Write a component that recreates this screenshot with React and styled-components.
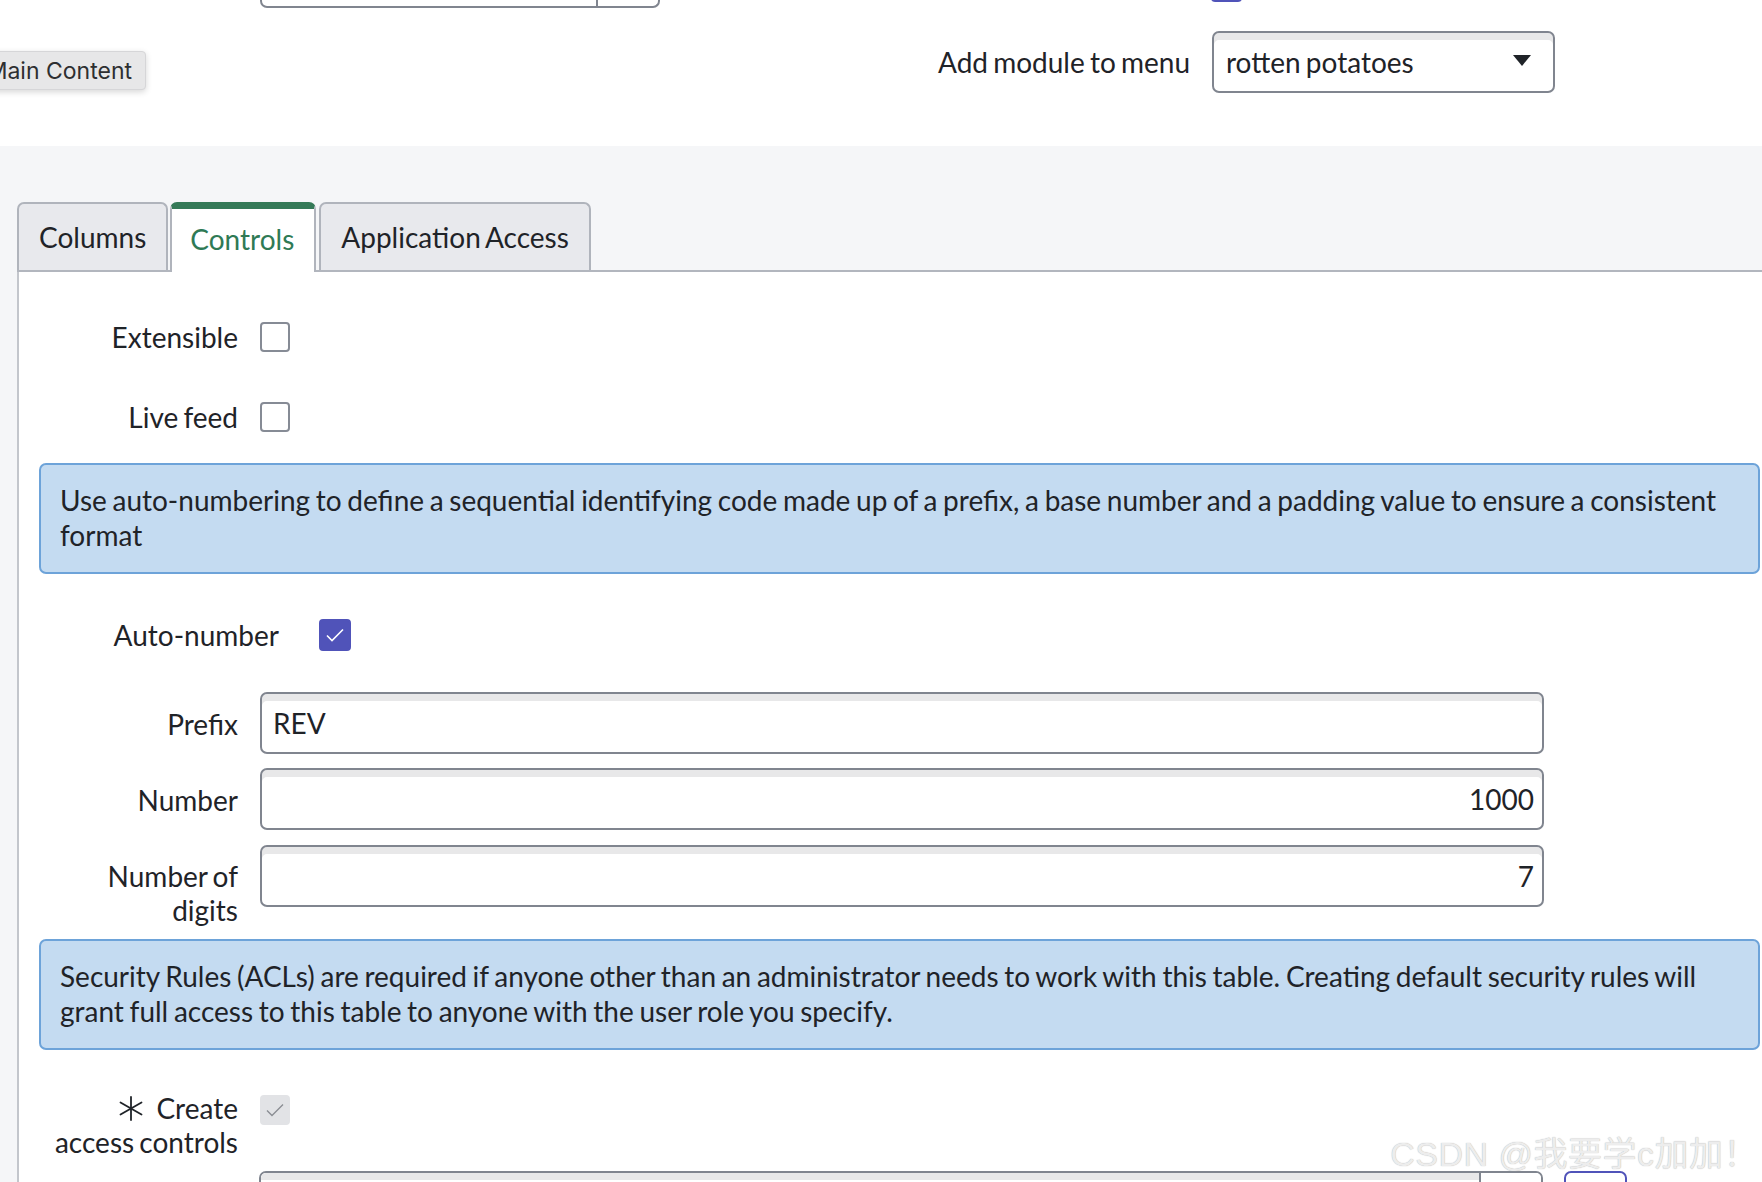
import styled, { createGlobalStyle } from 'styled-components'

const GlobalStyle = createGlobalStyle`
  html, body {
    margin: 0;
    padding: 0;
    background: #fff;
  }
  body {
    font-family: Lato, "Noto Sans", sans-serif;
    color: #1f2328;
    word-spacing: -2px;
    overflow: hidden;
  }
`

const Page = styled.div`
  position: relative;
  width: 1762px;
  height: 1182px;
  overflow: hidden;
  background: #f5f6f8;
`

const Header = styled.div`
  position: relative;
  height: 146px;
  background: #fff;
`

const CutRow = styled.div`
  display: flex;
  align-items: flex-end;
  height: 8px;
  overflow: hidden;
`

const CutField = styled.div`
  display: flex;
  margin-left: 260px;
  width: 400px;
  height: 40px;
  box-sizing: border-box;
  border: 2px solid #80858f;
  border-top: none;
  border-radius: 0 0 7px 7px;

  > span {
    flex: 1;
  }
  > span + span {
    flex: 0 0 60px;
    border-left: 2px solid #80858f;
  }
`

const CutCheck = styled.div`
  margin-left: 551px;
  margin-bottom: 6px;
  width: 31px;
  height: 30px;
  border-radius: 4px;
  background: #5053b9;
`

const SkipLink = styled.div`
  position: absolute;
  left: -36px;
  top: 51px;
  width: 182px;
  height: 39px;
  box-sizing: border-box;
  padding: 0 13px 0 0;
  display: flex;
  align-items: center;
  justify-content: flex-end;
  background: #e7e7e8;
  border: 1px solid #d6d6d8;
  border-radius: 4px;
  box-shadow: 0 2px 6px rgba(0, 0, 0, 0.16);
  font-family: Inter, "Liberation Sans", sans-serif;
  font-size: 23px;
  word-spacing: 0;
  color: #2e2f31;
  white-space: nowrap;
`

const ModuleRow = styled.div`
  display: flex;
  align-items: center;
  gap: 22px;
  margin-top: 23px;
  padding-left: 938px;
  font-size: 28px;
`

const Select = styled.div`
  width: 343px;
  height: 62px;
  box-sizing: border-box;
  padding: 0 22px 0 12px;
  display: flex;
  align-items: center;
  justify-content: space-between;
  border: 2px solid #80858f;
  border-radius: 7px;
  background: #fff;
  box-shadow: inset 0 7px 0 #e8e8e9;
  font-size: 28px;
`

const Caret = styled.span`
  width: 0;
  height: 0;
  border-left: 9px solid transparent;
  border-right: 9px solid transparent;
  border-top: 11px solid #1f2328;
  margin-top: -4px;
`

const TabArea = styled.div`
  padding: 56px 0 0 17px;
`

const TabBar = styled.div`
  display: flex;
  align-items: flex-end;
  height: 68px;
  border-bottom: 2px solid #b2b6be;
`

const Tab = styled.div`
  height: 68px;
  box-sizing: border-box;
  margin-right: ${p => (p.$active ? '3px' : '2px')};
  padding: 0 20px;
  display: flex;
  align-items: center;
  font-size: 28px;
  border: 2px solid #b0b4bc;
  border-bottom: none;
  border-radius: 7px 7px 0 0;
  background: ${p => (p.$active ? '#fff' : '#e8e9ed')};
  color: ${p => (p.$active ? '#2f7a55' : '#1f2328')};
  ${p =>
    p.$active &&
    `
    height: 70px;
    margin-bottom: -2px;
    padding-left: 18px;
    border-top: 7px solid #357a58;
    padding-bottom: 3px;
  `}
`

const Panel = styled.div`
  height: 910px;
  padding-top: 34px;
  box-sizing: border-box;
  border-left: 2px solid #c3c6cc;
  background: #fff;
`

const Row = styled.div`
  display: flex;
  align-items: ${p => (p.$top ? 'flex-start' : 'center')};
  gap: ${p => p.$gap || 22}px;
  min-height: ${p => (p.$top ? 0 : 62)}px;
  margin-top: ${p => p.$mt || 0}px;
`

const Label = styled.div`
  flex: 0 0 ${p => p.$w || 219}px;
  text-align: right;
  font-size: 28px;
  line-height: 34px;
  padding-top: ${p => p.$pt || 0}px;
`

const Box = styled.div`
  width: ${p => p.$size || 30}px;
  height: ${p => p.$size || 30}px;
  box-sizing: border-box;
  border-radius: 4px;
  margin-top: ${p => p.$mt || 0}px;
  display: flex;
  align-items: center;
  justify-content: center;
  border: 2px solid ${p => (p.$on ? '#5053b9' : p.$disabled ? '#e2e3e6' : '#868b95')};
  background: ${p => (p.$on ? '#5053b9' : p.$disabled ? '#e2e3e6' : '#fff')};
`

const Info = styled.div`
  margin: ${p => p.$mt}px 2px 0 20px;
  padding: 18px 19px 19px;
  border: 2px solid #6da3d9;
  border-radius: 7px;
  background: #c4dbf1;
  font-size: 28px;
  line-height: 35px;
  word-spacing: -1.5px;
`

const Field = styled.div`
  width: 1284px;
  height: 62px;
  box-sizing: border-box;
  padding: 0 8px 0 11px;
  display: flex;
  align-items: center;
  justify-content: ${p => (p.$right ? 'flex-end' : 'flex-start')};
  border: 2px solid #80858f;
  border-radius: 7px;
  background: #fff;
  box-shadow: inset 0 7px 0 #e8e8e9;
  font-size: 28px;
`

const RefField = styled.div`
  display: flex;
  width: 1284px;
  height: 62px;
  box-sizing: border-box;
  border: 2px solid #80858f;
  border-radius: 7px;
  overflow: hidden;

  > span {
    flex: 1;
    background: #fff;
    box-shadow: inset 0 7px 0 #e8e8e9;
  }
  > span + span {
    flex: 0 0 60px;
    border-left: 2px solid #80858f;
    box-shadow: none;
  }
`

const LookupButton = styled.div`
  width: 63px;
  height: 62px;
  box-sizing: border-box;
  border: 2px solid #5053b9;
  border-radius: 7px;
  background: #fff;
`

const Watermark = styled.div`
  position: absolute;
  right: 4px;
  top: 1127px;
  font-family: "Liberation Sans", "Noto Sans CJK SC", sans-serif;
  font-size: 34px;
  word-spacing: 0;
  letter-spacing: 0.5px;
  color: #ededed;
  text-shadow: 0 0 1px #a8a8a8;
  white-space: nowrap;

  > span {
    font-family: "Noto Sans CJK SC", sans-serif;
  }
`

const Check = ({ color, width = 1.6 }) => (
  <svg width="20" height="16" viewBox="0 0 20 16" fill="none">
    <path d="M2 8.5 L7 13.5 L18 2.5" stroke={color} strokeWidth={width} />
  </svg>
)

const Asterisk = () => (
  <svg width="24" height="25" viewBox="0 0 24 25" style={{ marginRight: 13, verticalAlign: '-2px' }}>
    <g stroke="#1f2328" strokeWidth="1.8" strokeLinecap="round">
      <line x1="12" y1="1" x2="12" y2="24" />
      <line x1="1.5" y1="6.5" x2="22.5" y2="18.5" />
      <line x1="1.5" y1="18.5" x2="22.5" y2="6.5" />
    </g>
  </svg>
)

export default function App() {
  return (
    <Page>
      <GlobalStyle />
      <Header>
        <CutRow>
          <CutField>
            <span />
            <span />
          </CutField>
          <CutCheck />
        </CutRow>
        <SkipLink>Main Content</SkipLink>
        <ModuleRow>
          <span>Add module to menu</span>
          <Select>
            <span>rotten potatoes</span>
            <Caret />
          </Select>
        </ModuleRow>
      </Header>

      <TabArea>
        <TabBar>
          <Tab>Columns</Tab>
          <Tab $active>Controls</Tab>
          <Tab>Application Access</Tab>
        </TabBar>

        <Panel>
          <Row>
            <Label>Extensible</Label>
            <Box />
          </Row>
          <Row $mt={18}>
            <Label>Live feed</Label>
            <Box />
          </Row>

          <Info $mt={15}>
            Use auto-numbering to define a sequential identifying code made up of a prefix, a base number and a
            padding value to ensure a consistent format
          </Info>

          <Row $mt={30} $gap={40}>
            <Label $w={260}>Auto-number</Label>
            <Box $on $size={32}>
              <Check color="#fff" />
            </Box>
          </Row>

          <Row $top $mt={26}>
            <Label $pt={15}>Prefix</Label>
            <Field>REV</Field>
          </Row>
          <Row $top $mt={14}>
            <Label $pt={15}>Number</Label>
            <Field $right>1000</Field>
          </Row>
          <Row $top $mt={15}>
            <Label $pt={14}>
              Number of
              <br />
              digits
            </Label>
            <Field $right>7</Field>
          </Row>

          <Info $mt={12}>
            Security Rules (ACLs) are required if anyone other than an administrator needs to work with this table.
            Creating default security rules will grant full access to this table to anyone with the user role you
            specify.
          </Info>

          <Row $top $mt={41}>
            <Label>
              <Asterisk />
              Create
              <br />
              access controls
            </Label>
            <Box $disabled $mt={4}>
              <Check color="#8b8e94" width={1.4} />
            </Box>
          </Row>

          <Row $top $mt={12} $gap={21}>
            <Label />
            <RefField>
              <span />
              <span />
            </RefField>
            <LookupButton />
          </Row>
        </Panel>
      </TabArea>

      <Watermark>
        CSDN @我要学c加加<span>！</span>
      </Watermark>
    </Page>
  )
}
